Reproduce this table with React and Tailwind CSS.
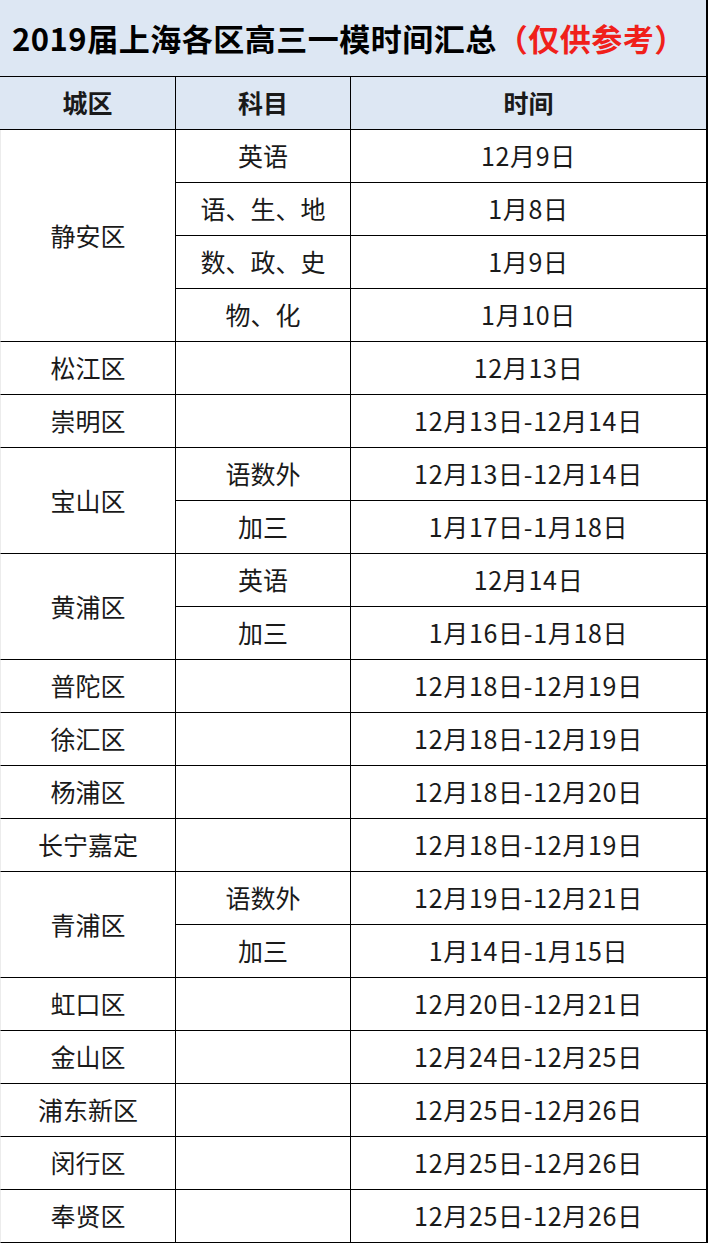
const rows = [
  { area: '静安区', span: 4, items: [['英语', '12月9日'], ['语、生、地', '1月8日'], ['数、政、史', '1月9日'], ['物、化', '1月10日']] },
  { area: '松江区', items: [['', '12月13日']] },
  { area: '崇明区', items: [['', '12月13日-12月14日']] },
  { area: '宝山区', span: 2, items: [['语数外', '12月13日-12月14日'], ['加三', '1月17日-1月18日']] },
  { area: '黄浦区', span: 2, items: [['英语', '12月14日'], ['加三', '1月16日-1月18日']] },
  { area: '普陀区', items: [['', '12月18日-12月19日']] },
  { area: '徐汇区', items: [['', '12月18日-12月19日']] },
  { area: '杨浦区', items: [['', '12月18日-12月20日']] },
  { area: '长宁嘉定', items: [['', '12月18日-12月19日']] },
  { area: '青浦区', span: 2, items: [['语数外', '12月19日-12月21日'], ['加三', '1月14日-1月15日']] },
  { area: '虹口区', items: [['', '12月20日-12月21日']] },
  { area: '金山区', items: [['', '12月24日-12月25日']] },
  { area: '浦东新区', items: [['', '12月25日-12月26日']] },
  { area: '闵行区', items: [['', '12月25日-12月26日']] },
  { area: '奉贤区', items: [['', '12月25日-12月26日']] },
]

const spanCls = { 1: 'row-span-1', 2: 'row-span-2', 4: 'row-span-4' }

const cell = 'flex items-center justify-center border-b border-black'

const App = () => {
  return (
    <div className="w-[708px] bg-white text-[#1a1a1a]" style={{ fontFamily: '"Noto Sans CJK SC", "Noto Sans", sans-serif' }}>
      <div className="h-[77px] bg-[#dde7f3] border-b border-black border-r-2 flex items-center pl-[12px] text-[31px] font-bold tracking-[0.5px]">
        <span className="text-black">2019届上海各区高三一模时间汇总</span>
        <span className="text-[#f0201a]">（仅供参考）</span>
      </div>
      <div className="grid grid-cols-[176px_175px_357px] auto-rows-[53px] text-[25px]">
        <div className={cell + ' bg-[#dde7f3] border-r font-bold'}>城区</div>
        <div className={cell + ' bg-[#dde7f3] border-r font-bold'}>科目</div>
        <div className={cell + ' bg-[#dde7f3] border-r-2 font-bold'}>时间</div>
        {rows.map((r) => (
          <>
            <div key={r.area} className={cell + ' border-r border-l border-l-[#ececec] ' + spanCls[r.span || 1]}>{r.area}</div>
            {r.items.map(([subj, date], i) => (
              <>
                <div key={r.area + 's' + i} className={cell + ' border-r col-start-2'}>{subj}</div>
                <div key={r.area + 'd' + i} className={cell + ' border-r-2 col-start-3 tracking-[0.7px]'}>{date}</div>
              </>
            ))}
          </>
        ))}
      </div>
    </div>
  )
}

export default App
